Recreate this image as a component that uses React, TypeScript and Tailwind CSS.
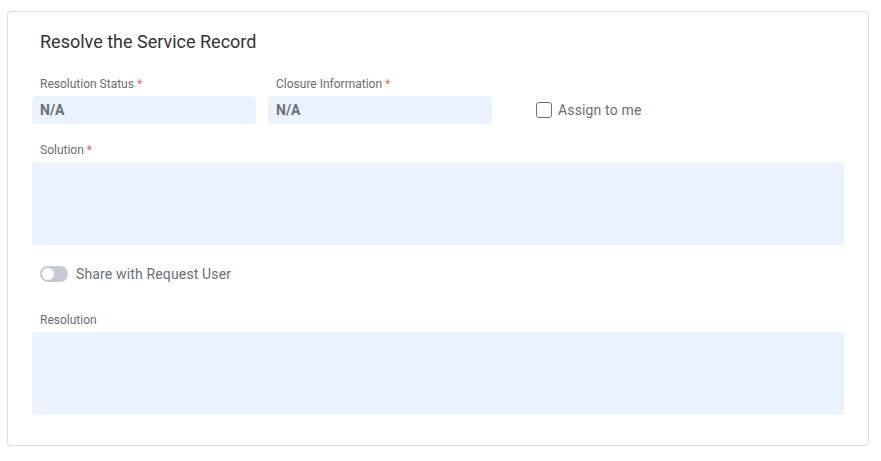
import React from 'react';

function Label({ text, required }: { text: string; required?: boolean }) {
  return (
    <div className="pl-2 h-4 leading-4 text-[12px] text-[#6a6e74] mb-[4px]">
      {text}
      {required && <span className="text-[#e06666] ml-[3px]">*</span>}
    </div>
  );
}

function ReadOnly({ value }: { value: string }) {
  return (
    <div className="h-[28px] rounded-[3px] bg-[#eaf3fe] px-2 flex items-center text-[14px] font-bold text-[#6b6f75]">
      {value}
    </div>
  );
}

export default function App() {
  return (
    <div className="pt-[11px] pl-[7px] font-['Roboto',sans-serif]">
      <div className="w-[862px] h-[435px] border border-[#dcdcdc] rounded-[4px] bg-white px-6 pt-[18px]">
        <h2 className="pl-2 text-[18px] leading-6 text-[#333333]">Resolve the Service Record</h2>

        <div className="mt-[22px] flex items-end gap-3">
          <div className="w-[224px]">
            <Label text="Resolution Status" required />
            <ReadOnly value="N/A" />
          </div>
          <div className="w-[224px]">
            <Label text="Closure Information" required />
            <ReadOnly value="N/A" />
          </div>
          <label className="ml-[32px] h-[28px] flex items-center gap-[6px] text-[14px] tracking-[0.15px] text-[#6b6f75]">
            <span className="w-4 h-4 rounded-[3px] border border-[#6b7076] bg-white" />
            Assign to me
          </label>
        </div>

        <div className="mt-[18px]">
          <Label text="Solution" required />
          <div className="h-[83px] w-[812px] rounded-[3px] bg-[#eaf3fe]" />
        </div>

        <div className="mt-[21px] pl-2 h-4 flex items-center gap-2 text-[14px] tracking-[0.15px] text-[#6b6f75]">
          <span className="w-[28px] h-4 rounded-full bg-[#c5cad3] flex items-center pl-[2px]">
            <span className="w-3 h-3 rounded-full bg-white" />
          </span>
          Share with Request User
        </div>

        <div className="mt-[30px]">
          <Label text="Resolution" />
          <div className="h-[83px] w-[812px] rounded-[3px] bg-[#eaf3fe]" />
        </div>
      </div>
    </div>
  );
}
